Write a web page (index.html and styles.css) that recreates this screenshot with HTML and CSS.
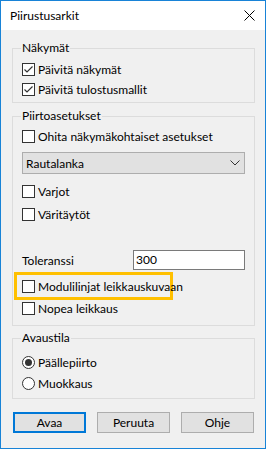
FILE: index.html
```html
<html>
<head>
    <title>Piirustusarkit</title>
    <meta charset="UTF-8">
    <meta name="viewport" content="width=device-width, initial-scale=1.0">
    <link rel="stylesheet" href="styles.css">
</head>
<body>
  <div class="window">
    <div class="title-bar">
      <span class="title">Piirustusarkit</span>
      <svg class="close" width="11" height="11" viewBox="0 0 11 11">
        <path d="M0.5 0.5 L10.5 10.5 M10.5 0.5 L0.5 10.5" stroke="#000" stroke-width="1" fill="none"/>
      </svg>
    </div>

    <div class="content">
      <fieldset class="group group-views">
        <legend>Näkymät</legend>
        <label class="row">
          <span class="check"><svg width="11" height="11" viewBox="0 0 11 11"><path d="M1.5 5.5 L4 8 L9.5 2.5" stroke="#333" stroke-width="1.2" fill="none"/></svg></span>Päivitä näkymät
        </label>
        <label class="row">
          <span class="check"><svg width="11" height="11" viewBox="0 0 11 11"><path d="M1.5 5.5 L4 8 L9.5 2.5" stroke="#333" stroke-width="1.2" fill="none"/></svg></span>Päivitä tulostusmallit
        </label>
      </fieldset>

      <fieldset class="group group-draw">
        <legend>Piirtoasetukset</legend>
        <label class="row"><span class="check"></span>Ohita näkymäkohtaiset asetukset</label>
        <div class="combo">
          <span>Rautalanka</span>
          <svg width="10" height="6" viewBox="0 0 10 6">
            <path d="M0.5 0.5 L5 5 L9.5 0.5" stroke="#333" stroke-width="1" fill="none"/>
          </svg>
        </div>
        <label class="row row-varjot"><span class="check"></span>Varjot</label>
        <label class="row row-tight"><span class="check"></span>Väritäytöt</label>
        <div class="tolerance">
          <span>Toleranssi</span>
          <div class="text-input">300</div>
        </div>
        <div class="highlight">
          <label class="row"><span class="check"></span>Modulilinjat leikkauskuvaan</label>
        </div>
        <label class="row row-after"><span class="check"></span>Nopea leikkaus</label>
      </fieldset>

      <fieldset class="group group-open">
        <legend>Avaustila</legend>
        <label class="row"><span class="radio selected"></span>Päällepiirto</label>
        <label class="row row-radio"><span class="radio"></span>Muokkaus</label>
      </fieldset>

      <div class="buttons">
        <button class="btn default">Avaa</button>
        <button class="btn">Peruuta</button>
        <button class="btn">Ohje</button>
      </div>
    </div>
  </div>
</body>
</html>
```

FILE: styles.css
```css
 body {
     margin: 0;
     background-color: white;
     font-family: Lato, "Liberation Sans", sans-serif;
     font-size: 12px;
     color: black;
 }

 .window {
     width: 266px;
     height: 449px;
     box-sizing: border-box;
     border: 1px solid #1883d7;
     background-color: #f0f0f0;
 }

 .title-bar {
     height: 29px;
     background-color: white;
     display: flex;
     align-items: center;
     justify-content: space-between;
     padding: 0 10px 0 9px;
 }

 .close {
     margin-top: -1px;
 }

 .content {
     padding: 10px 10px 0 11px;
 }

 .group {
     margin: 0 0 5px 0;
     padding: 0 9px;
     border: 1px solid #dcdcdc;
     min-width: 0;
 }

 .group legend {
     padding: 0 1px;
     margin-left: -1px;
     line-height: 16px;
 }

 .group-views {
     padding-top: 3px;
     padding-bottom: 3px;
 }

 .group-draw {
     padding-top: 2px;
     padding-bottom: 7px;
     margin-bottom: 4px;
 }

 .group-open {
     padding-top: 6px;
     padding-bottom: 5px;
 }

 .row {
     display: flex;
     align-items: center;
     height: 20px;
     white-space: nowrap;
 }

 .row-varjot {
     margin-top: 7px;
 }

 .row-tight {
     margin-top: 3px;
 }

 .row-after {
     margin-top: -2px;
 }

 .row-radio {
     margin-top: 1px;
 }

 .check {
     width: 13px;
     height: 13px;
     box-sizing: border-box;
     border: 1px solid #333;
     background-color: white;
     margin-right: 3px;
     flex: none;
     display: flex;
 }

 .radio {
     width: 13px;
     height: 13px;
     box-sizing: border-box;
     border: 1px solid #333;
     border-radius: 50%;
     background-color: white;
     margin-right: 3px;
     display: flex;
     align-items: center;
     justify-content: center;
     flex: none;
 }

 .radio.selected::after {
     content: "";
     width: 7px;
     height: 7px;
     border-radius: 50%;
     background-color: #333;
 }

 .combo {
     margin-top: 6px;
     height: 22px;
     box-sizing: border-box;
     border: 1px solid #adadad;
     background-color: #e1e1e1;
     display: flex;
     align-items: center;
     justify-content: space-between;
     padding: 0 4px 0 3px;
 }

 .tolerance {
     margin-top: 26px;
     display: flex;
     align-items: center;
     justify-content: space-between;
     height: 20px;
 }

 .text-input {
     width: 112px;
     height: 20px;
     box-sizing: border-box;
     border: 1px solid #7a7a7a;
     background-color: white;
     padding-left: 2px;
     line-height: 18px;
 }

 .highlight {
     margin: 2px 0 0 -8px;
     width: 159px;
     height: 28px;
     box-sizing: border-box;
     border: 3px solid #ffc000;
     padding-left: 5px;
     display: flex;
     align-items: center;
 }

 .buttons {
     margin-top: 13px;
     display: flex;
     gap: 11px;
     padding-left: 1px;
 }

 .btn {
     width: 73px;
     height: 21px;
     box-sizing: border-box;
     border: 1px solid #adadad;
     background-color: #e1e1e1;
     font-family: inherit;
     font-size: 12px;
     color: black;
     padding: 0;
 }

 .btn.default {
     border: 2px solid #0078d7;
 }
```
